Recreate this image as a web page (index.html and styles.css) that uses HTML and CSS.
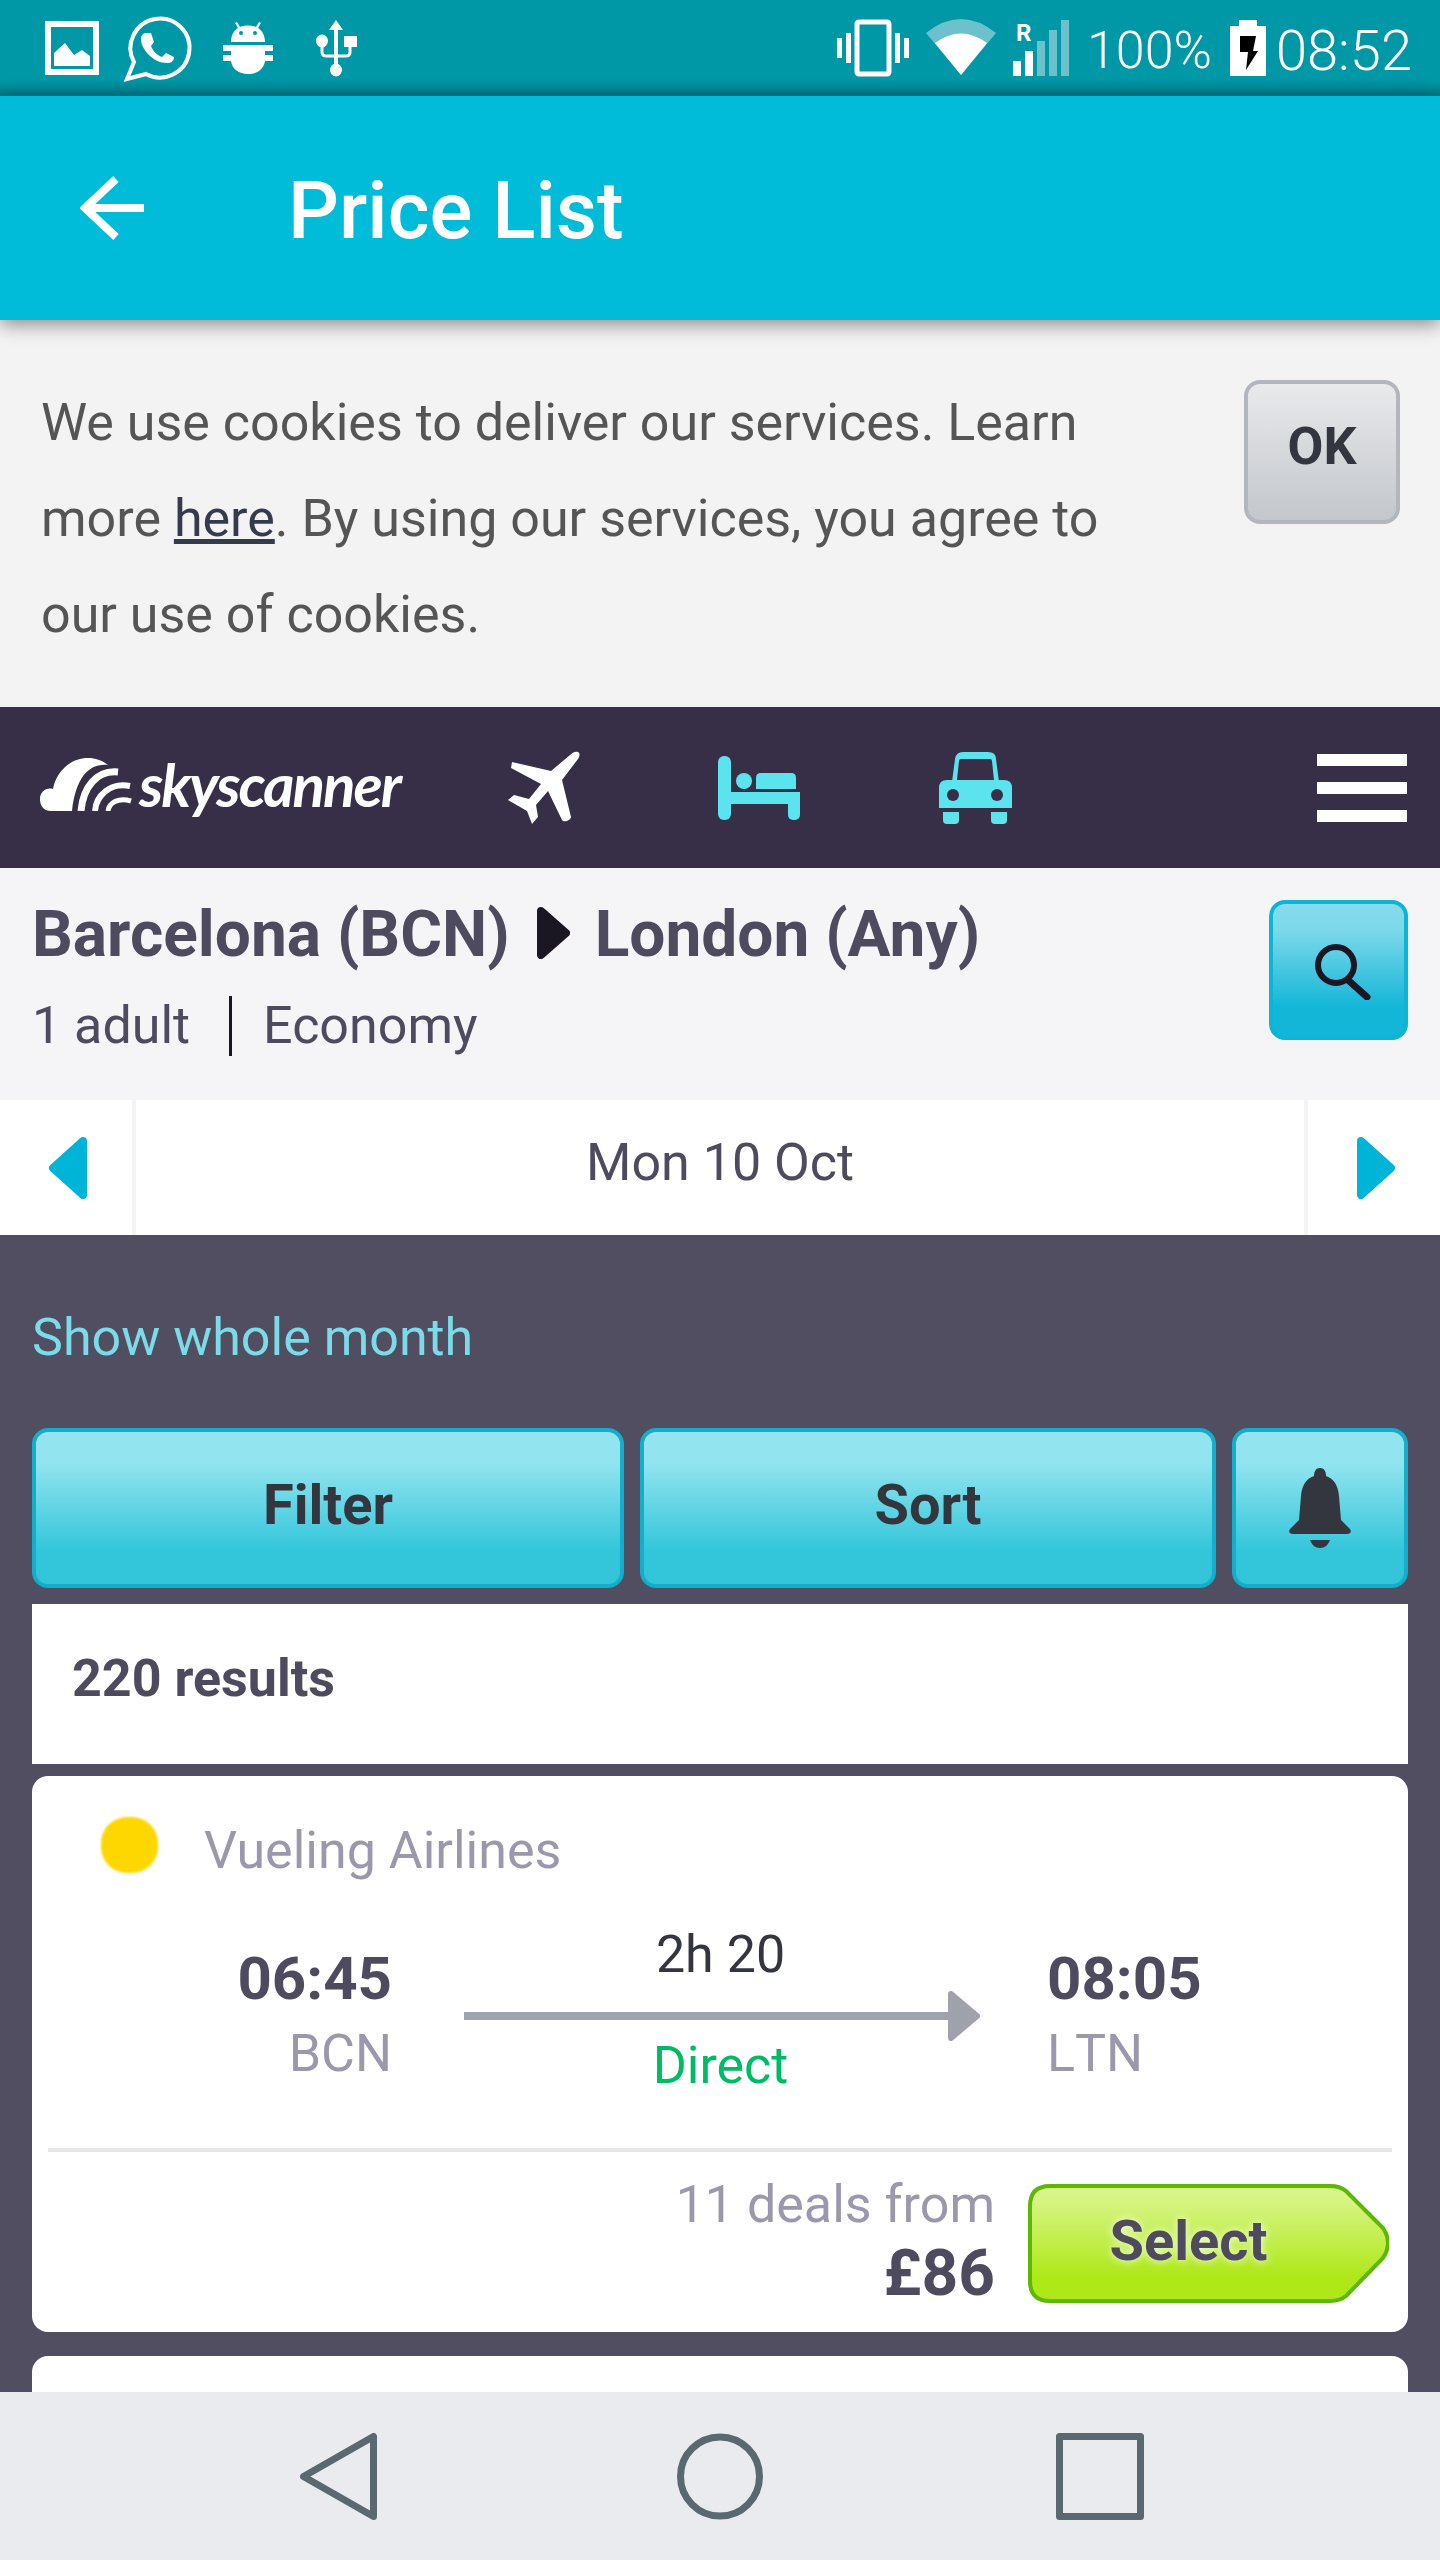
FILE: index.html
```html
<!DOCTYPE html>
<html lang="en">
  <head>
    <meta charset="UTF-8" />
    <meta name="viewport" content="width=device-width, initial-scale=1.0" />
    <title>Price List</title>
    <link rel="stylesheet" href="styles.css">
  </head>
  <body>
    <div class="screen">
      <div class="status-bar">
        <svg class="slot" viewBox="0 0 88 96" fill="#fff">
          <rect x="20" y="24" width="48" height="48" fill="none" stroke="#fff" stroke-width="6"></rect>
          <path d="M26 53L37 43l9 12 8-5 8 6v10H26z"></path>
        </svg>
        <svg class="slot" viewBox="3 0 88 96" fill="#fff">
          <path d="M21 62l-7 17 19-5A29.5 29.5 0 1 0 21 62z" fill="none" stroke="#fff" stroke-width="4"></path>
          <path d="M33 33h5l3 9-3 4c2 5 6 9 11 11l4-4 8 4c0 5-4 6-7 6-14 0-26-14-26-24 0-3 2-6 5-6z"></path>
        </svg>
        <svg class="slot" viewBox="0 0 88 96" fill="#fff">
          <path d="M27 42c0-8 4-12 7-14l-3-5 2-1 3 5c5-2 11-2 16 0l3-5 2 1-3 5c3 2 7 6 7 14z"></path>
          <path d="M19 45h50v6H61v4h8v6h-8c-1 8-8 13-17 13s-16-5-17-13h-8v-6h8v-4h-8z"></path>
          <circle cx="37" cy="33" r="2" fill="#0097a7"></circle>
          <circle cx="51" cy="33" r="2" fill="#0097a7"></circle>
        </svg>
        <svg class="slot" viewBox="0 0 88 96" fill="#fff">
          <path d="M44 20l7 10h-5v25h-4V30h-5z"></path>
          <ellipse cx="30" cy="41" rx="6" ry="6.5"></ellipse>
          <rect x="52" y="36" width="13" height="11"></rect>
          <path d="M30 46v6q0 4 4 4h20q4 0 4-4v-6" fill="none" stroke="#fff" stroke-width="3"></path>
          <rect x="42" y="54" width="4" height="12"></rect>
          <ellipse cx="44" cy="70" rx="6" ry="6.5"></ellipse>
        </svg>

        <div class="status-right">
          <svg class="ico-vibrate" viewBox="0 0 72 96" fill="#fff">
            <rect x="20" y="22" width="32" height="52" rx="2" fill="none" stroke="#fff" stroke-width="5"></rect>
            <rect x="9" y="33" width="5" height="30"></rect>
            <rect x="0" y="38" width="5" height="20"></rect>
            <rect x="58" y="33" width="5" height="30"></rect>
            <rect x="67" y="38" width="5" height="20"></rect>
          </svg>
          <svg class="ico-wifi" viewBox="0 0 70 96" fill="#fff">
            <path d="M35 75L0 33Q35 5 70 33z" opacity=".42"></path>
            <path d="M35 75L9 43Q35 24 61 43z"></path>
          </svg>
          <svg class="ico-signal" viewBox="0 0 56 96" fill="#fff">
            <text x="3" y="41" class="roam">R</text>
            <rect x="0" y="61" width="8" height="15"></rect>
            <rect x="12" y="51" width="8" height="25"></rect>
            <rect x="24" y="41" width="8" height="35" opacity=".42"></rect>
            <rect x="36" y="30" width="8" height="46" opacity=".42"></rect>
            <rect x="48" y="20" width="8" height="56" opacity=".42"></rect>
          </svg>
          <span class="percent">100%</span>
          <svg class="ico-battery" viewBox="0 0 36 96">
            <path d="M9 20h18v6h9v50H0V26h9z" fill="#fff"></path>
            <path d="M10 36h16l-3 15h5L16 70l2-18h-8z" fill="#000"></path>
          </svg>
          <span class="clock">08:52</span>
        </div>
      </div>

      <header class="app-bar">
        <svg class="back" viewBox="0 0 64 64" fill="none" stroke="#fff" stroke-width="8">
          <path d="M36 3L5 32l31 29"></path>
          <path d="M5 32h59"></path>
        </svg>
        <h1>Price List</h1>
      </header>

      <div class="cookies">
        <p>We use cookies to deliver our services. Learn more <a href="#">here</a>. By using our services, you agree to our use of cookies.</p>
        <button class="ok">OK</button>
      </div>

      <nav class="top-nav">
        <svg class="cloud" viewBox="0 0 93 53" fill="#fff">
          <path d="M11 53C3 53 0 47 0 41c0-7 6-12 13-10C15 18 27 0 48 0c8 0 15 3 20 7C50 5 36 18 32 53z"></path>
          <path d="M41 53C43 30 56 12 78 14" fill="none" stroke="#fff" stroke-width="7"></path>
          <path d="M55 53C56 38 70 24 90 28" fill="none" stroke="#fff" stroke-width="6"></path>
          <path d="M68 53C69 45 78 39 91 43" fill="none" stroke="#fff" stroke-width="5"></path>
        </svg>
        <span class="brand">skyscanner</span>
        <svg class="plane" viewBox="0 0 72 74" fill="#fff">
          <path d="M62 4c3-3 6-4 8-3s2 4 0 7L54 29l9 37c0 3-7 6-9 3L40 40 28 54l2 12-6 7-5-13L0 49l6-5 15 4 12-15L3 17l1-6 39 9z"></path>
        </svg>
        <svg class="bed" viewBox="0 0 82 64" fill="#5be3ee">
          <rect x="0" y="0" width="13" height="64" rx="6"></rect>
          <circle cx="26" cy="25" r="8"></circle>
          <path d="M38 33V22q0-5 5-5h30q5 0 5 5v11z"></path>
          <rect x="13" y="36" width="69" height="12"></rect>
          <rect x="70" y="36" width="12" height="28" rx="5"></rect>
        </svg>
        <svg class="car" viewBox="0 0 73 72" fill="#5be3ee">
          <path d="M13 30l3-23q1-7 8-7h25q8 0 8 7l3 23z"></path>
          <path d="M18 28l2-19q0-2 2-2h29q2 0 2 2l2 19z" fill="#372f47"></path>
          <path d="M0 56V36q0-8 8-8h57q8 0 8 8v20z"></path>
          <circle cx="14" cy="43" r="6" fill="#372f47"></circle>
          <circle cx="58" cy="43" r="6" fill="#372f47"></circle>
          <path d="M4 60h16v8q0 4-4 4H8q-4 0-4-4z"></path>
          <path d="M52 60h16v8q0 4-4 4h-8q-4 0-4-4z"></path>
        </svg>
        <div class="burger">
          <span></span>
          <span></span>
          <span></span>
        </div>
      </nav>

      <section class="search-head">
        <div class="route">
          <h2>
            <span>Barcelona (BCN)</span>
            <svg class="route-arrow" viewBox="0 0 33 52" fill="#1a1622" stroke="#1a1622" stroke-width="8" stroke-linejoin="round">
              <path d="M4 4l25 22L4 48z"></path>
            </svg>
            <span>London (Any)</span>
          </h2>
          <p><span>1 adult</span><span class="cabin">Economy</span></p>
        </div>
        <button class="search-btn">
          <svg viewBox="0 0 56 56" fill="none" stroke="#1a1622">
            <circle cx="21" cy="21" r="18" stroke-width="6"></circle>
            <path d="M33 36l19 17" stroke-width="7" stroke-linecap="round"></path>
          </svg>
        </button>
      </section>

      <div class="date-row">
        <div class="date-prev">
          <svg viewBox="0 0 40 64" fill="#00b4d8" stroke="#00b4d8" stroke-width="8" stroke-linejoin="round">
            <path d="M35 5L5 32l30 27z"></path>
          </svg>
        </div>
        <div class="date-label">Mon 10 Oct</div>
        <div class="date-next">
          <svg viewBox="0 0 40 64" fill="#00b4d8" stroke="#00b4d8" stroke-width="8" stroke-linejoin="round">
            <path d="M5 5l30 27L5 59z"></path>
          </svg>
        </div>
      </div>

      <main class="results">
        <a class="month-link" href="#">Show whole month</a>

        <div class="tools">
          <button class="tool tool-filter">Filter</button>
          <button class="tool tool-sort">Sort</button>
          <button class="tool tool-alert">
            <svg viewBox="0 0 64 80" fill="#33363f">
              <path d="M32 0c-4 0-6 3-6 8-8 3-12 9-13 20l-2 24-9 9c-2 3 0 5 3 5h54c3 0 5-2 3-5l-9-9-2-24c-1-11-5-17-13-20 0-5-2-8-6-8z"></path>
              <path d="M22 72h20c-2 5-5 8-10 8s-8-3-10-8z"></path>
            </svg>
          </button>
        </div>

        <div class="count">220 results</div>

        <article class="card">
          <div class="airline">
            <span class="airline-logo"></span>
            <span>Vueling Airlines</span>
          </div>
          <div class="flight">
            <div class="leg leg-from">
              <strong>06:45</strong>
              <span>BCN</span>
            </div>
            <div class="trip">
              <div class="duration">2h 20</div>
              <svg viewBox="0 0 516 50" fill="#9fa2ab">
                <rect x="0" y="21" width="486" height="8"></rect>
                <path d="M487 3l26 22-26 22z" stroke="#9fa2ab" stroke-width="6" stroke-linejoin="round"></path>
              </svg>
              <div class="stops">Direct</div>
            </div>
            <div class="leg">
              <strong>08:05</strong>
              <span>LTN</span>
            </div>
          </div>
          <div class="deal">
            <div class="price">
              <span>11 deals from</span>
              <strong>£86</strong>
            </div>
            <button class="select">
              <svg viewBox="0 0 361 119">
                <defs>
                  <linearGradient id="selectFill" x1="0" y1="0" x2="0" y2="1">
                    <stop offset="0.08" stop-color="#d9f58a"></stop>
                    <stop offset="0.8" stop-color="#aee816"></stop>
                  </linearGradient>
                </defs>
                <path d="M22 2h280q10 0 16 5l37 37q10 15 0 30l-37 38q-6 5-16 5H22Q2 117 2 97V22Q2 2 22 2z" fill="url(#selectFill)" stroke="#5cb800" stroke-width="4"></path>
              </svg>
              <span>Select</span>
            </button>
          </div>
        </article>

        <article class="card"></article>
      </main>

      <footer class="soft-keys">
        <svg class="key-back" viewBox="0 0 77 87" fill="none" stroke="#5a6870" stroke-width="7" stroke-linejoin="round">
          <path d="M73.5 3.5v80l-70-40z"></path>
        </svg>
        <svg class="key-home" viewBox="0 0 86 87" fill="none" stroke="#5a6870" stroke-width="7">
          <circle cx="43" cy="43.5" r="39.5"></circle>
        </svg>
        <svg class="key-recent" viewBox="0 0 88 87" fill="none" stroke="#5a6870" stroke-width="7" stroke-linejoin="round">
          <rect x="3.5" y="3.5" width="81" height="80"></rect>
        </svg>
      </footer>
    </div>
  </body>
</html>
```

FILE: styles.css
```css
:root {
  --ink: #4f4b5e;
  --ink-dark: #33363f;
  --muted: #9c98ab;
  --aqua: #5be3ee;
  --tool-border: #12aecb;
}

* {
  box-sizing: border-box;
}

html, body {
  margin: 0;
  padding: 0;
}

body {
  color: var(--ink);
  font-family: Roboto, 'Liberation Sans', sans-serif;
  font-size: 52px;
  line-height: 60px;
}

button {
  appearance: none;
  margin: 0;
  padding: 0;
  font-family: inherit;
  cursor: pointer;
}

svg {
  display: block;
  flex: none;
}

.screen {
  display: flex;
  flex-direction: column;
  width: 1440px;
  height: 2560px;
  overflow: hidden;
}

/* phone chrome */
.status-bar {
  display: flex;
  flex: none;
  height: 96px;
  padding-left: 28px;
  background: linear-gradient(#0097a7 0, #0097a7 84%, #007b88 100%);
  color: #fff;
}

.slot {
  width: 88px;
  height: 96px;
}

.status-right {
  display: flex;
  align-items: center;
  margin-left: auto;
  padding-right: 28px;
}

.status-right svg {
  height: 96px;
}

.ico-vibrate { width: 72px; }
.ico-wifi { width: 70px; margin-left: 17px; }
.ico-signal { width: 56px; margin-left: 17px; }
.ico-battery { width: 36px; margin-left: 18px; }

.roam {
  font-size: 24px;
  font-weight: 700;
}

.percent {
  margin-left: 18px;
  padding-top: 5px;
  font-size: 52px;
  font-weight: 300;
}

.clock {
  margin-left: 10px;
  padding-top: 5px;
  font-size: 56px;
  font-weight: 300;
}

.app-bar {
  position: relative;
  z-index: 1;
  display: flex;
  flex: none;
  align-items: center;
  height: 224px;
  padding-left: 80px;
  background: #00bcd8;
  box-shadow: 0 4px 18px rgba(0, 0, 0, .45);
  color: #fff;
}

.back {
  width: 64px;
  height: 64px;
  margin-top: -1px;
}

.app-bar h1 {
  margin: 5px 0 0 144px;
  font-size: 80px;
  font-weight: 500;
  line-height: 96px;
}

/* cookie notice */
.cookies {
  display: flex;
  flex: none;
  justify-content: space-between;
  height: 387px;
  padding: 55px 40px 0 41px;
  background: #f3f3f3;
  color: #555;
}

.cookies p {
  width: 1100px;
  margin: 0;
  line-height: 96px;
}

.cookies a {
  color: #353b4d;
}

.ok {
  width: 156px;
  height: 144px;
  margin-top: 5px;
  padding-bottom: 12px;
  border: 4px solid #b3b6bd;
  border-radius: 16px;
  background: linear-gradient(#e8eaec, #c3c6cb);
  color: var(--ink-dark);
  font-size: 52px;
  font-weight: 700;
}

/* skyscanner nav */
.top-nav {
  display: flex;
  flex: none;
  align-items: center;
  height: 161px;
  padding: 0 33px 0 40px;
  background: #372f47;
  color: #fff;
}

.cloud {
  width: 93px;
  height: 53px;
  margin-top: -7px;
}

.brand {
  width: 261px;
  margin: -7px 0 0 6px;
  font-family: Lato, sans-serif;
  font-size: 60px;
  font-style: italic;
  font-weight: 700;
  letter-spacing: -2px;
  white-space: nowrap;
}

.plane {
  width: 72px;
  height: 74px;
  margin-left: 108px;
}

.bed {
  width: 82px;
  height: 64px;
  margin-left: 138px;
}

.car {
  width: 73px;
  height: 72px;
  margin-left: 139px;
}

.burger {
  display: flex;
  flex-direction: column;
  gap: 16px;
  width: 90px;
  margin-left: auto;
}

.burger span {
  height: 12px;
  background: #fff;
}

/* route header */
.search-head {
  display: flex;
  flex: none;
  justify-content: space-between;
  height: 232px;
  padding: 29px 32px 0 32px;
  background: #f5f5f8;
}

.route {
  flex: none;
}

.route h2 {
  display: flex;
  align-items: center;
  margin: 0;
  font-size: 64px;
  font-weight: 700;
  line-height: 76px;
  white-space: nowrap;
}

.route-arrow {
  width: 33px;
  height: 52px;
  margin: -4px 25px 0 27px;
}

.route p {
  display: flex;
  align-items: center;
  margin: 23px 0 0;
  line-height: 60px;
}

.cabin {
  margin-left: 39px;
  padding-left: 31px;
  border-left: 3px solid #1a1622;
}

.search-btn {
  display: flex;
  flex: none;
  align-items: center;
  justify-content: center;
  width: 139px;
  height: 140px;
  margin-top: 3px;
  border: 4px solid #0cb4d6;
  border-radius: 16px;
  background: linear-gradient(#85dcec 0, #7cd8ea 20%, #14b6d8 78%, #14b6d8 100%);
}

.search-btn svg {
  width: 56px;
  height: 56px;
  margin-left: 8px;
  margin-top: 4px;
}

/* date pager */
.date-row {
  display: flex;
  flex: none;
  height: 135px;
  background: #fff;
}

.date-prev, .date-next {
  flex: none;
  width: 136px;
  padding-top: 36px;
}

.date-prev {
  padding-left: 48px;
  border-right: 4px solid #f4f4f6;
}

.date-next {
  padding-left: 48px;
  border-left: 4px solid #f4f4f6;
}

.date-prev svg, .date-next svg {
  width: 40px;
  height: 64px;
}

.date-label {
  flex: 1;
  color: var(--ink);
  line-height: 126px;
  text-align: center;
}

/* results list */
.results {
  flex: 1;
  min-height: 0;
  padding: 73px 32px 0;
  overflow: hidden;
  background: #524e61;
}

.month-link {
  display: block;
  color: #7bdbe8;
  text-decoration: none;
}

.tools {
  display: flex;
  gap: 16px;
  margin-top: 60px;
}

.tool {
  display: flex;
  align-items: center;
  justify-content: center;
  height: 160px;
  padding-bottom: 6px;
  border: 4px solid var(--tool-border);
  border-radius: 16px;
  background: linear-gradient(#92e4ee 0, #92e4ee 20%, #33c6db 78%, #33c6db 100%);
  color: var(--ink-dark);
  font-size: 56px;
  font-weight: 700;
}

.tool-filter { width: 592px; }
.tool-sort { width: 576px; }
.tool-alert { width: 176px; padding-bottom: 0; }

.tool-alert svg {
  width: 64px;
  height: 80px;
}

.count {
  height: 160px;
  margin-top: 16px;
  padding-left: 40px;
  background: #fff;
  font-weight: 700;
  line-height: 150px;
}

.card {
  height: 556px;
  margin-top: 12px;
  background: #fff;
  border-radius: 16px;
}

.card + .card {
  margin-top: 24px;
}

.airline {
  display: flex;
  align-items: center;
  padding: 45px 0 0 69px;
  color: var(--muted);
}

.airline-logo {
  width: 57px;
  height: 56px;
  margin: -12px 46px 0 0;
  border-radius: 46%;
  background: #ffd700;
  filter: blur(1px);
}

.flight {
  display: flex;
  margin-top: 41px;
}

.leg {
  display: flex;
  flex-direction: column;
  padding-top: 21px;
  color: var(--muted);
}

.leg strong {
  color: var(--ink);
  font-size: 60px;
  line-height: 72px;
}

.leg span {
  margin-top: 9px;
  font-kerning: none;
}

.leg-from {
  width: 360px;
  text-align: right;
}

.trip {
  width: 516px;
  margin: 0 67px 0 72px;
  text-align: center;
}

.duration {
  padding: 3px 3px 0 0;
  color: var(--ink-dark);
}

.trip svg {
  width: 516px;
  height: 50px;
  margin-top: 6px;
}

.stops {
  padding-right: 3px;
  color: #00bb66;
  line-height: 50px;
}

.deal {
  display: flex;
  justify-content: flex-end;
  margin: 57px 16px 0;
  padding: 23px 3px 0 0;
  border-top: 4px solid #e6e6ec;
}

.price {
  display: flex;
  flex-direction: column;
  margin-right: 33px;
  color: var(--muted);
  text-align: right;
}

.price strong {
  margin-top: 3px;
  color: var(--ink);
  font-size: 64px;
  line-height: 72px;
}

.select {
  position: relative;
  width: 361px;
  height: 119px;
  margin-top: 9px;
  border: 0;
  background: none;
  color: var(--ink);
  font-size: 56px;
  font-weight: 700;
}

.select svg {
  position: absolute;
  top: 0;
  left: 0;
  width: 361px;
  height: 119px;
}

.select span {
  position: relative;
  display: block;
  padding: 0 40px 6px 0;
  text-shadow: 0 0 8px rgba(255, 255, 255, .9);
}

.soft-keys {
  display: flex;
  flex: none;
  justify-content: center;
  height: 168px;
  padding: 41px 0 0 4px;
  background: #e9ebef;
}

.soft-keys svg {
  height: 87px;
}

.key-back { width: 77px; margin-right: 300px; }
.key-home { width: 86px; margin-right: 293px; }
.key-recent { width: 88px; }
```
